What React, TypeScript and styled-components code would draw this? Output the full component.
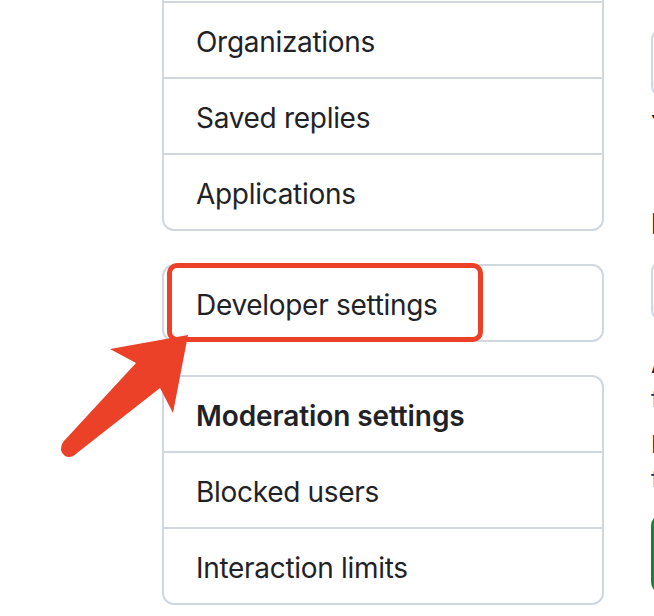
import React from "react";
import styled, { createGlobalStyle } from "styled-components";

const GlobalStyle = createGlobalStyle`
  html, body {
    margin: 0;
    padding: 0;
    background: #ffffff;
    overflow: hidden;
  }
  body {
    font-family: "Inter", "Noto Sans", "Liberation Sans", sans-serif;
    color: #1f2328;
    -webkit-font-smoothing: antialiased;
  }
`;

const Page = styled.div`
  position: relative;
  width: 654px;
  height: 616px;
  overflow: hidden;
  display: flex;
  align-items: flex-start;
  gap: 47px;
  padding-left: 162px;
  box-sizing: border-box;
`;

const Sidebar = styled.nav`
  width: 442px;
  flex-shrink: 0;
  margin-top: -75px;
  display: flex;
  flex-direction: column;
  gap: 33px;
`;

const MenuBox = styled.div`
  position: relative;
  border: 2px solid #d0d7de;
  border-radius: 12px;
  display: flex;
  flex-direction: column;
`;

const MenuItem = styled.div<{ $heading?: boolean }>`
  height: 74px;
  box-sizing: border-box;
  padding: 19px 32px 15px;
  font-size: 28px;
  line-height: 40px;
  font-weight: ${(p) => (p.$heading ? 600 : 400)};
  color: #1f2328;
  letter-spacing: ${(p) => (p.$heading ? "-0.1px" : "-0.3px")};
  white-space: nowrap;
  & + & {
    border-top: 2px solid #d0d7de;
    height: 76px;
  }
`;

const Highlight = styled.div`
  position: absolute;
  left: 3px;
  top: -3px;
  width: 316px;
  height: 79px;
  box-sizing: border-box;
  border: 5px solid #eb4128;
  border-radius: 10px;
  pointer-events: none;
`;

const Main = styled.main`
  width: 600px;
  flex-shrink: 0;
  display: flex;
  flex-direction: column;
`;

const FieldLabel = styled.div<{ $top: number }>`
  margin-top: ${(p) => p.$top}px;
  font-size: 28px;
  line-height: 40px;
  font-weight: 600;
  color: #1f2328;
  white-space: nowrap;
`;

const Input = styled.div<{ $top: number; $height: number }>`
  margin-top: ${(p) => p.$top}px;
  height: ${(p) => p.$height}px;
  border: 2px solid #d0d7de;
  border-radius: 12px;
  background: #f6f8fa;
  box-sizing: border-box;
`;

const Note = styled.p<{ $top: number }>`
  margin: ${(p) => p.$top}px 0 0;
  font-size: 24px;
  line-height: 34px;
  color: #1f2328;
  white-space: nowrap;
`;

const SaveButton = styled.div`
  margin-top: 18px;
  width: 260px;
  height: 80px;
  border-radius: 12px;
  background: #1f883d;
  border: 2px solid #1a7f37;
  box-sizing: border-box;
`;

const ArrowLayer = styled.svg`
  position: absolute;
  left: 0;
  top: 0;
  pointer-events: none;
`;

export default function App() {
  return (
    <>
      <GlobalStyle />
      <Page>
        <Sidebar>
          <MenuBox>
            <MenuItem aria-hidden="true" />
            <MenuItem>Organizations</MenuItem>
            <MenuItem>Saved replies</MenuItem>
            <MenuItem>Applications</MenuItem>
          </MenuBox>
          <MenuBox>
            <MenuItem>Developer settings</MenuItem>
            <Highlight />
          </MenuBox>
          <MenuBox>
            <MenuItem $heading>Moderation settings</MenuItem>
            <MenuItem>Blocked users</MenuItem>
            <MenuItem>Interaction limits</MenuItem>
          </MenuBox>
        </Sidebar>
        <Main>
          <FieldLabel $top={-30}>Name</FieldLabel>
          <Input $top={18} $height={70} />
          <Note $top={10}>Your name may appear around GitHub where you contribute.</Note>
          <FieldLabel $top={62}>Bio</FieldLabel>
          <Input $top={16} $height={62} />
          <Note $top={26}>All of the fields on this page are optional and can be deleted</Note>
          <Note $top={0}>for filling them out, you're giving us consent to share this data.</Note>
          <Note $top={12}>In order to learn more about how we use this information,</Note>
          <Note $top={0}>follow the privacy statement.</Note>
          <SaveButton />
        </Main>
        <ArrowLayer width="654" height="616" viewBox="0 0 654 616">
          <path
            d="M188 335 L110 349 L136 363 L63 442 Q58 451 65 456 Q71 459 77 453 L160 388 L173 413 Z"
            fill="#eb4128"
          />
        </ArrowLayer>
      </Page>
    </>
  );
}
